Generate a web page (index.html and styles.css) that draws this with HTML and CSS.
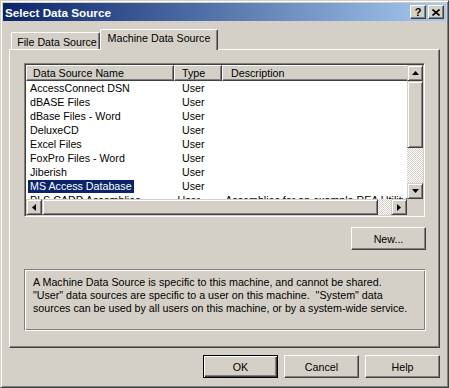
FILE: index.html
```html
<!DOCTYPE html>
<html lang="en">
<head>
    <meta charset="UTF-8">
    <title>Select Data Source</title>
    <link rel="stylesheet" href="styles.css">
</head>
<body>
    <div class="window">
        <!-- Title bar -->
        <div class="titlebar">
            <span class="title">Select Data Source</span>
            <div class="caption-buttons">
                <button class="cap-btn help-btn">?</button>
                <button class="cap-btn">
                    <svg width="8" height="7" viewBox="0 0 8 7"><path d="M0.5 0.5 L7.5 6.5 M7.5 0.5 L0.5 6.5" stroke="#000" stroke-width="1.6" fill="none"/></svg>
                </button>
            </div>
        </div>

        <div class="client">
            <!-- Tabs -->
            <div class="tabs">
                <div class="tab">File Data Source</div>
                <div class="tab active">Machine Data Source</div>
            </div>

            <div class="panel">
                <!-- List view -->
                <div class="listview">
                    <div class="lv-view">
                        <div class="lv-header">
                            <div class="hd-cell col-name">Data Source Name</div>
                            <div class="hd-cell col-type">Type</div>
                            <div class="hd-cell col-desc">Description</div>
                        </div>
                        <div class="lv-row"><div class="cell col-name"><span>AccessConnect DSN</span></div><div class="cell col-type">User</div><div class="cell col-desc"></div></div>
                        <div class="lv-row"><div class="cell col-name"><span>dBASE Files</span></div><div class="cell col-type">User</div><div class="cell col-desc"></div></div>
                        <div class="lv-row"><div class="cell col-name"><span>dBase Files - Word</span></div><div class="cell col-type">User</div><div class="cell col-desc"></div></div>
                        <div class="lv-row"><div class="cell col-name"><span>DeluxeCD</span></div><div class="cell col-type">User</div><div class="cell col-desc"></div></div>
                        <div class="lv-row"><div class="cell col-name"><span>Excel Files</span></div><div class="cell col-type">User</div><div class="cell col-desc"></div></div>
                        <div class="lv-row"><div class="cell col-name"><span>FoxPro Files - Word</span></div><div class="cell col-type">User</div><div class="cell col-desc"></div></div>
                        <div class="lv-row"><div class="cell col-name"><span>Jiberish</span></div><div class="cell col-type">User</div><div class="cell col-desc"></div></div>
                        <div class="lv-row selected"><div class="cell col-name"><span>MS Access Database</span></div><div class="cell col-type">User</div><div class="cell col-desc"></div></div>
                        <div class="lv-row"><div class="cell col-name"><span>PLS CADD Assemblies</span></div><div class="cell col-type">User</div><div class="cell col-desc">Assemblies for an example REA Utility</div></div>
                    </div>

                    <div class="vscroll">
                        <div class="sb-btn"><svg width="7" height="4" viewBox="0 0 7 4"><polygon points="0,4 7,4 3.5,0" fill="#000"/></svg></div>
                        <div class="sb-thumb v-thumb"></div>
                        <div class="sb-track"></div>
                        <div class="sb-btn"><svg width="7" height="4" viewBox="0 0 7 4"><polygon points="0,0 7,0 3.5,4" fill="#000"/></svg></div>
                    </div>
                    <div class="hscroll">
                        <div class="sb-btn"><svg width="4" height="7" viewBox="0 0 4 7"><polygon points="4,0 4,7 0,3.5" fill="#000"/></svg></div>
                        <div class="sb-thumb h-thumb"></div>
                        <div class="sb-track"></div>
                        <div class="sb-btn"><svg width="4" height="7" viewBox="0 0 4 7"><polygon points="0,0 0,7 4,3.5" fill="#000"/></svg></div>
                    </div>
                    <div class="sb-corner"></div>
                </div>

                <div class="new-row">
                    <button class="btn">New...</button>
                </div>

                <!-- Info box -->
                <div class="info">
                    A Machine Data Source is specific to this machine, and cannot be shared.<br>
                    "User" data sources are specific to a user on this machine.&nbsp; "System" data<br>
                    sources can be used by all users on this machine, or by a system-wide service.
                </div>
            </div>

            <div class="footer">
                <button class="btn default">OK</button>
                <button class="btn">Cancel</button>
                <button class="btn">Help</button>
            </div>
        </div>
    </div>
</body>
</html>
```

FILE: styles.css
```css
* {
    margin: 0;
    padding: 0;
    box-sizing: border-box;
}

body {
    background-color: #d4d0c8;
    font-family: "Liberation Sans", Arial, sans-serif;
    font-size: 10.7px;
    color: #000;
}

/* Window frame */
.window {
    width: 449px;
    height: 388px;
    background-color: #d4d0c8;
    border: 1px solid;
    border-color: #d4d0c8 #404040 #404040 #d4d0c8;
    box-shadow: inset 1px 1px #fff, inset -1px -1px #808080;
    padding: 2px;
    display: flex;
    flex-direction: column;
}

.titlebar {
    height: 18px;
    display: flex;
    align-items: center;
    justify-content: space-between;
    padding: 0 2px;
    background: linear-gradient(to right, #0a246a, #a6caf0);
}

.title {
    color: #fff;
    font-weight: bold;
    font-size: 11.7px;
}

.caption-buttons {
    display: flex;
    gap: 2px;
}

.cap-btn {
    width: 16px;
    height: 14px;
    background-color: #d4d0c8;
    border: 1px solid;
    border-color: #fff #404040 #404040 #fff;
    box-shadow: inset -1px -1px #808080;
    display: flex;
    align-items: center;
    justify-content: center;
    font-family: "Liberation Sans", Arial, sans-serif;
    font-weight: bold;
    font-size: 11px;
    line-height: 1;
    color: #000;
}

/* Client area */
.client {
    flex: 1;
    padding: 0 6px;
}

.tabs {
    display: flex;
    align-items: flex-end;
    height: 20px;
    margin-top: 8px;
    padding-left: 2px;
}

.tab {
    height: 17px;
    width: 89px;
    text-align: center;
    line-height: 16px;
    padding-top: 1px;
    padding-left: 3px;
    border-top: 1px solid #fff;
    border-left: 1px solid #fff;
    border-right: 1px solid #404040;
    box-shadow: inset -1px 0 #808080;
    border-radius: 2px 2px 0 0;
    background-color: #d4d0c8;
}

.tab.active {
    width: 118px;
    height: 21px;
    margin-bottom: -1px;
    line-height: 17px;
    padding-top: 0;
    padding-left: 0;
    position: relative;
    z-index: 1;
}

.panel {
    height: 299px;
    border: 1px solid;
    border-color: #fff #404040 #404040 #fff;
    box-shadow: inset -1px -1px #808080;
    padding: 13px 14px 0;
}

/* List view */
.listview {
    height: 154px;
    background-color: #fff;
    border: 1px solid;
    border-color: #808080 #fff #fff #808080;
    box-shadow: inset 1px 1px #404040, inset -1px -1px #d4d0c8;
    padding: 1px;
    display: grid;
    grid-template-columns: 1fr 16px;
    grid-template-rows: 1fr 16px;
}

.lv-view {
    overflow: hidden;
    white-space: nowrap;
}

.lv-header {
    display: flex;
    height: 16px;
    width: 600px;
}

.hd-cell {
    height: 16px;
    line-height: 14px;
    background-color: #d4d0c8;
    border-top: 1px solid #fff;
    border-left: 1px solid #fff;
    border-right: 1px solid #404040;
    border-bottom: 1px solid #404040;
    box-shadow: inset -1px -1px #808080;
}

.hd-cell.col-name { width: 148px; padding-left: 6px; }
.hd-cell.col-type { width: 48px; padding-left: 7px; }
.hd-cell.col-desc { flex: 1; padding-left: 8px; }

.lv-row {
    display: flex;
    height: 14px;
    line-height: 14px;
}

.cell.col-name { width: 148px; padding-left: 2px; }
.cell.col-name span { padding: 0 2px; display: inline-block; height: 13px; line-height: 13px; margin-top: 1px; }
.cell.col-type { width: 48px; padding-left: 8px; }
.cell.col-desc { padding-left: 9px; }

.lv-row.selected .col-name span {
    background-color: #0a246a;
    color: #fff;
}

/* Scroll bars */
.vscroll {
    display: flex;
    flex-direction: column;
}

.hscroll {
    display: flex;
}

.sb-btn,
.sb-thumb,
.sb-corner {
    background-color: #d4d0c8;
}

.sb-btn,
.sb-thumb {
    border: 1px solid;
    border-color: #d4d0c8 #404040 #404040 #d4d0c8;
    box-shadow: inset 1px 1px #fff, inset -1px -1px #808080;
}

.sb-btn {
    width: 16px;
    height: 16px;
    flex: none;
    display: flex;
    align-items: center;
    justify-content: center;
}

.sb-btn svg {
    display: block;
}

.v-thumb { height: 67px; flex: none; }
.h-thumb { width: 336px; flex: none; }

.sb-track {
    flex: 1;
    background: repeating-conic-gradient(#d4d0c8 0 25%, #fff 0 50%) 0 0 / 2px 2px;
}

/* Buttons */
.new-row {
    display: flex;
    justify-content: flex-end;
    margin-top: 10px;
    margin-right: -1px;
}

.btn {
    width: 75px;
    height: 23px;
    background-color: #d4d0c8;
    border: 1px solid;
    border-color: #fff #404040 #404040 #fff;
    box-shadow: inset -1px -1px #808080;
    font-family: "Liberation Sans", Arial, sans-serif;
    font-size: 10.7px;
    color: #000;
}

.btn.default {
    border-color: #000;
    box-shadow: inset 1px 1px #fff, inset -1px -1px #404040, inset -2px -2px #808080;
}

.info {
    margin-top: 19px;
    margin-right: -1px;
    height: 62px;
    border: 1px solid;
    border-color: #808080 #fff #fff #808080;
    box-shadow: inset 1px 1px #fff, inset -1px -1px #808080;
    padding: 6px 8px;
    line-height: 13px;
    white-space: nowrap;
    overflow: hidden;
}

.footer {
    display: flex;
    justify-content: flex-end;
    gap: 6px;
    margin-top: 7px;
}
```
